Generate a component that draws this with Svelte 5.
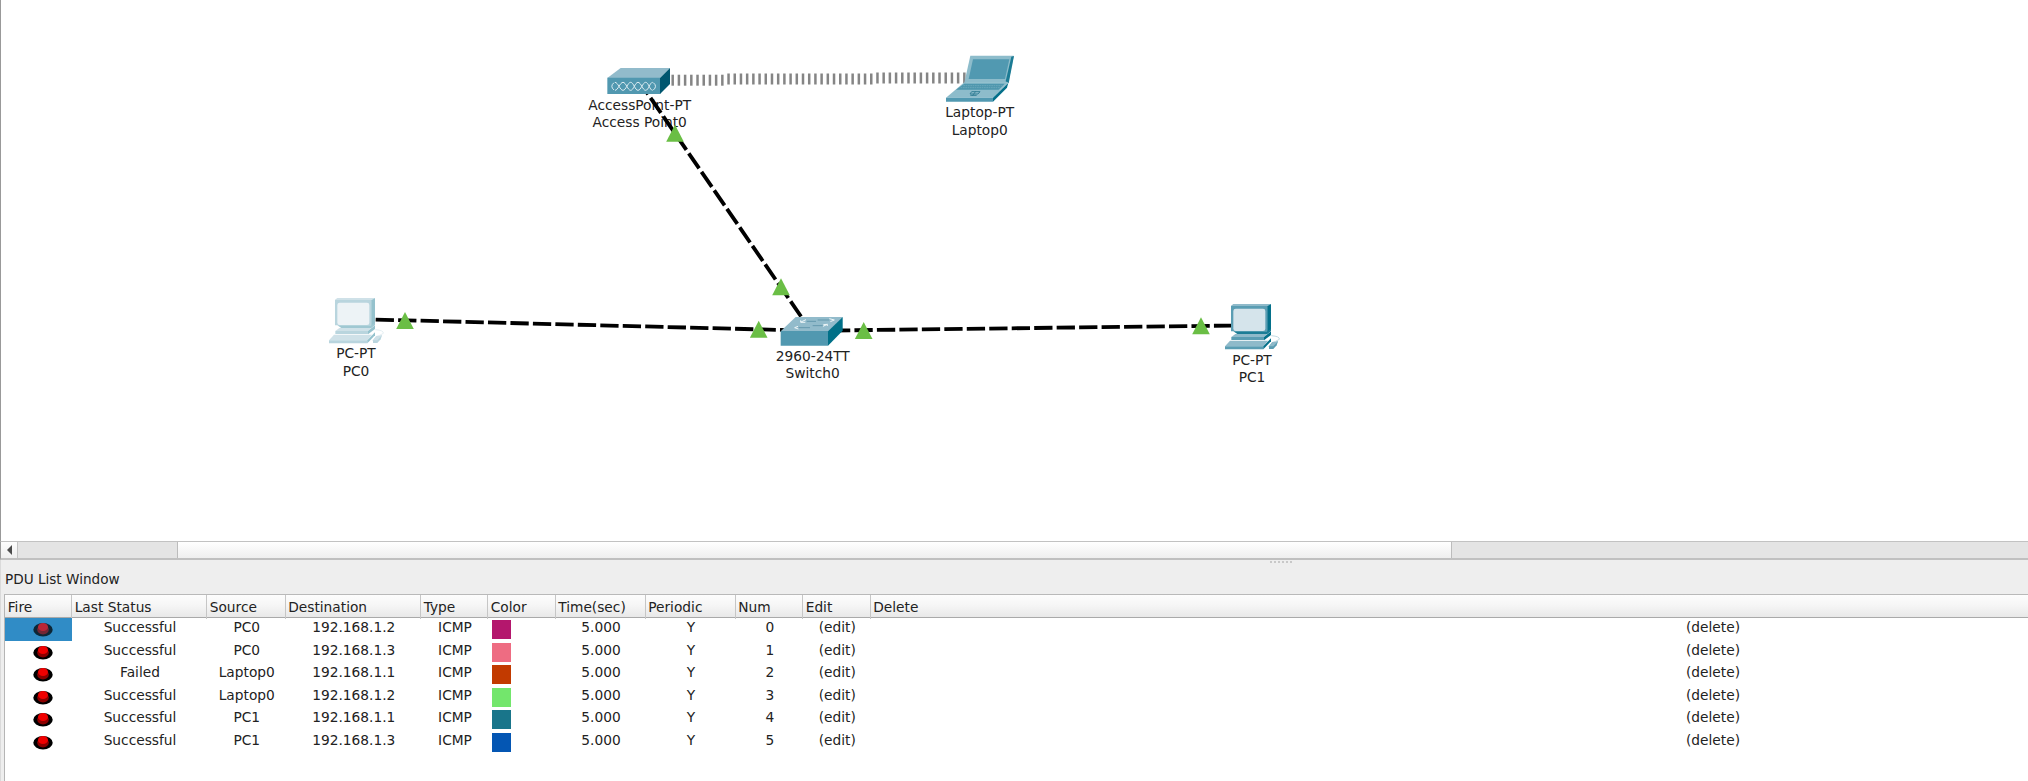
<script>
  const columns = [
    { key: 'fire', label: 'Fire', width: 67 },
    { key: 'status', label: 'Last Status', width: 135 },
    { key: 'source', label: 'Source', width: 78.5 },
    { key: 'destination', label: 'Destination', width: 135.5 },
    { key: 'type', label: 'Type', width: 67 },
    { key: 'color', label: 'Color', width: 67.5 },
    { key: 'time', label: 'Time(sec)', width: 90 },
    { key: 'periodic', label: 'Periodic', width: 90 },
    { key: 'num', label: 'Num', width: 67.5 },
    { key: 'edit', label: 'Edit', width: 67.5 },
    { key: 'delete', label: 'Delete', width: 1684 }
  ];
  const grid = columns.map((c) => c.width + 'px').join(' ');

  const rows = [
    ['Successful', 'PC0', '192.168.1.2', '#b4176d'],
    ['Successful', 'PC0', '192.168.1.3', '#ee6c82'],
    ['Failed', 'Laptop0', '192.168.1.1', '#c23a00'],
    ['Successful', 'Laptop0', '192.168.1.2', '#73e66c'],
    ['Successful', 'PC1', '192.168.1.1', '#19758a'],
    ['Successful', 'PC1', '192.168.1.3', '#0456b3']
  ].map(([status, source, destination, color], i) => ({
    status, source, destination, color,
    type: 'ICMP', time: '5.000', periodic: 'Y', num: i, edit: '(edit)', delete: '(delete)'
  }));

  const labels = [
    { x: 639.7, y: 109.5, model: 'AccessPoint-PT', name: 'Access Point0' },
    { x: 979.7, y: 117, model: 'Laptop-PT', name: 'Laptop0' },
    { x: 356, y: 358, model: 'PC-PT', name: 'PC0' },
    { x: 812.7, y: 360.6, model: '2960-24TT', name: 'Switch0' },
    { x: 1252, y: 364.6, model: 'PC-PT', name: 'PC1' }
  ];

  const links = [
    'M353.2 319L811 330.7',
    'M809.5 330.8L1251 325.3',
    'M637.8 79.3L811 331'
  ];

  const ports = [
    [675, 124.7], [781, 278.3], [405, 311.9], [758.7, 320.7], [863.7, 322], [1201, 317.2]
  ];

  const pulses = Array.from({ length: 48 }, (_, i) => ({
    x: 672.7 + i * 6.205,
    y: i < 9 ? 80.2 : i < 33 ? 79 : 78
  }));
</script>

{#snippet pc()}
  <path d="M160 42H273L262 51H153V47Z" fill="#8fbaca" />
  <path d="M153 48H263V124H153Z" fill="#5a9db3" />
  <path d="M262 49L273 42V118L262 130Z" fill="#04708a" />
  <rect x="160" y="56" width="96" height="67" rx="7" fill="#d5e4eb" />
  <path d="M160 124H262L273 117V123L262 132H172Z" fill="#1c7d96" />
  <path d="M166 132H262L252 141H154Z" fill="#8fbaca" />
  <path d="M154 141H252V150H154Z" fill="#5a9db3" />
  <path d="M252 141L273 124V135L252 151Z" fill="#04708a" />
  <path d="M150 152H264L250 169H135Z" fill="#8fbaca" />
  <path d="M135 169H250V178H135Z" fill="#5a9db3" />
  <path d="M250 169L273 145V154L250 178Z" fill="#04708a" />
  <path d="M277 156L294 154L290 166L280 177H267V169Z" fill="#5a9db3" />
  <path d="M277 156L293 155L280 169H267Z" fill="#8fbaca" />
  <path d="M285 155L298 148Q300 139 274 137" fill="none" stroke="#c3dbe4" stroke-width="3" />
{/snippet}

<main>
  <div class="workspace">
    <svg class="topology" width="2028" height="541" viewBox="0 0 2028 541">
      {#each labels as l}
        <text x={l.x} y={l.y}>{l.model}</text>
        <text x={l.x} y={l.y + 17.5}>{l.name}</text>
      {/each}

      {#each pulses as p}
        <path d="M{p.x} {p.y - 5.5}V{p.y + 5.5}" stroke="#858585" stroke-width="2.5" />
      {/each}
      {#each links as d}
        <path {d} stroke="#000" stroke-width="3.8" stroke-dasharray="18.3 4.17" />
      {/each}

      <!-- access point -->
      <g transform="translate(570 40) scale(.33333)">
        <path d="M152 84H300L270 114H112Z" fill="#92bbcb" />
        <path d="M112 113H271V162H112Z" fill="#5198b0" />
        <path d="M270 114L300 84V132L270 162Z" fill="#00566f" />
        <path d="M135 127C144 127 150 151 159 151S173 127 182 127 195 151 204 151 218 127 227 127 239 151 248 151M135 151C144 151 150 127 159 127S173 151 182 151 195 127 204 127 218 151 227 151 239 127 248 127M132 128Q119 139 132 150M250 128Q263 139 250 150" fill="none" stroke="#e6f1f5" stroke-width="2.8" />
      </g>

      <!-- laptop -->
      <g transform="translate(900 40) scale(.33333)">
        <path d="M211 47H341L325 128H193Z" fill="#8dbccb" />
        <path d="M334 50L342 48L326 130L317 124Z" fill="#1b7b94" />
        <path d="M219 58H328L315 117H206Z" fill="#5199b1" />
        <path d="M193 127H325L279 173H138Z" fill="#8dbccb" />
        <path d="M193 131H314L296 149H168Z" fill="#4e97ae" />
        <path d="M190 137H307M182 143H301" stroke="#79afc0" stroke-width="2" stroke-dasharray="5 2" />
        <path d="M138 173H279V185H138Z" fill="#5199b1" />
        <path d="M325 128L321 143L279 185V173Z" fill="#04708a" />
        <path d="M215 155H240L234 162H210ZM211 166H230M227 154L217 168" fill="none" stroke="#347f97" stroke-width="3" />
      </g>

      <!-- switch -->
      <g transform="translate(740 270) scale(.33333)">
        <path d="M167 141H308L265 184H122Z" fill="#92bbcb" />
        <path d="M122 183H264V227H122Z" fill="#5198b0" />
        <path d="M264 184L308 141V182L264 227Z" fill="#007088" />
        <path d="M200 154H228M233 150H268M176 173H210M218 167H248" fill="none" stroke="#6499ae" stroke-width="3" />
        <path d="M198 149L183 156M182 151V157H196M268 146L283 150L271 155M174 169L164 173L175 177M262 163L249 169M250 164L262 163V168" fill="none" stroke="#edf5f7" stroke-width="3" />
      </g>

      <g transform="translate(310 280) scale(.33333)">
        <path d="M75 54H195V166L182 188H57V177L75 160Z" fill="#fff" />
        <g transform="translate(-78 12)" class="faded">{@render pc()}</g>
      </g>
      <g transform="translate(1180 290) scale(.33333)">{@render pc()}</g>

      {#each ports as [x, y]}
        <path d="M{x} {y}L{x + 8.8} {y + 17}H{x - 8.8}Z" fill="#6abe45" />
      {/each}
    </svg>
  </div>

  <div class="scrollbar">
    <div class="step">
      <svg width="5" height="10" viewBox="0 0 5 10"><path d="M5 0V10L0 5Z" fill="#4c4c4c" /></svg>
    </div>
    <div class="groove"></div>
    <div class="thumb"></div>
    <div class="groove rest"></div>
  </div>

  <section class="panel">
    <div class="splitter">
      {#each Array(6) as _}<i></i>{/each}
    </div>
    <h2>PDU List Window</h2>
    <div class="table">
      <div class="head" style="grid-template-columns: {grid}">
        {#each columns as c}<div>{c.label}</div>{/each}
      </div>
      {#each rows as row, i}
        <div class="row" style="grid-template-columns: {grid}">
          {#each columns as c}
            {#if c.key === 'fire'}
              <div class="fire" class:selected={i === 0}>
                <svg width="20" height="15" viewBox="0 0 20 15">
                  <ellipse cx="10" cy="7.8" rx="9.7" ry="6.8" fill="#000" />
                  <ellipse cx="10" cy="7.6" rx="5.8" ry="4.9" fill="#8c0000" />
                  <ellipse cx="10" cy="5" rx="5" ry="4" fill="#f00000" />
                </svg>
              </div>
            {:else if c.key === 'color'}
              <div class="color"><span style="background: {row.color}"></span></div>
            {:else}
              <div>{row[c.key]}</div>
            {/if}
          {/each}
        </div>
      {/each}
    </div>
  </section>
</main>

<style>
  :global(body) { margin: 0; background: #eee; overflow: hidden; }
  main {
    box-sizing: border-box;
    width: 2028px;
    height: 781px;
    overflow: hidden;
    display: flex;
    flex-direction: column;
    font: 13.75px/17px "DejaVu Sans", sans-serif;
    color: #222;
    background: #eee;
  }
  .workspace {
    box-sizing: border-box;
    height: 541px;
    flex: none;
    background: #fff;
    box-shadow: inset 1px 0 #999;
  }
  .topology { display: block; }
  .topology text { text-anchor: middle; fill: #222; }
  .faded { opacity: .42; }
  .scrollbar {
    box-sizing: border-box;
    height: 19px;
    flex: none;
    display: flex;
    border-top: 1px solid #c2c2c2;
    border-bottom: 2px solid #c0c0c0;
    border-left: 1px solid #999;
  }
  .step {
    width: 16px;
    display: flex;
    align-items: center;
    justify-content: center;
    border-right: 1px solid #c4c4c4;
    background: linear-gradient(#fdfdfd, #efefef);
  }
  .groove { width: 159px; border-right: 1px solid #bcbcbc; background: #e4e4e4; }
  .thumb { width: 1273px; background: linear-gradient(#fff, #efefef); }
  .rest { flex: 1; border-right: 0; border-left: 1px solid #bcbcbc; }
  .panel { flex: 1; display: flex; flex-direction: column; box-shadow: inset 1px 0 #dadada; }
  .splitter { display: flex; gap: 2px; padding: 1px 0 0 1270px; height: 3px; }
  .splitter i { width: 2px; height: 2px; background: #c8c8c8; }
  h2 { margin: 7px 0 0 5px; height: 23px; font: inherit; font-size: 13.6px; line-height: 17px; }
  .table {
    flex: 1;
    margin-left: 4px;
    border-left: 1px solid #b5b5b5;
    border-top: 1px solid #b9b9b9;
    background: #fff;
    overflow: hidden;
  }
  .head, .row { display: grid; width: max-content; }
  .head {
    height: 22px;
    border-bottom: 1px solid #a9a9a9;
    background: linear-gradient(#fdfdfd, #f5f5f5 50%, #e8e8e8);
  }
  .head div { padding-left: 2.7px; line-height: 24px; border-right: 1px solid #c6c6c6; }
  .row { height: 22.5px; }
  .row > div { text-align: center; line-height: 19px; padding-left: 1px; }
  .row > .fire { display: flex; justify-content: center; padding: 4px 0 0 9px; }
  .fire svg { display: block; }
  .selected { background: #308cc6; }
  .selected svg { opacity: .72; }
  .row > .color { padding: 2px 0 0 4.4px; display: flex; }
  .color span { width: 19px; height: 19px; }
</style>
